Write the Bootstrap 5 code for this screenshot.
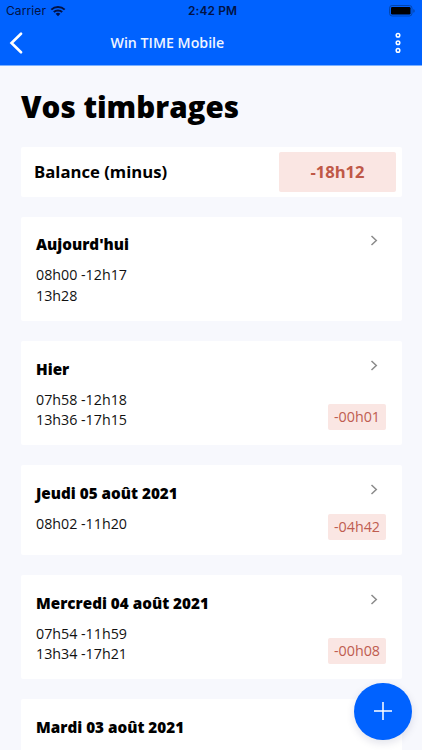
<!DOCTYPE html>
<html lang="fr">
<head>
<meta charset="utf-8">
<meta name="viewport" content="width=device-width, initial-scale=1">
<title>Win TIME Mobile</title>
<link href="https://cdn.jsdelivr.net/npm/bootstrap@5.3.0/dist/css/bootstrap.min.css" rel="stylesheet">
<style>
body{background:#f7f8fd;color:#000;font-family:"Open Sans",sans-serif;height:750px}
svg{display:block}
.app-header{background:#0062ff;height:66px;border-bottom:1px solid #7ab0ff}
.status-bar{height:22px;padding:0 7px 0 6px;font:400 12px/22px Inter,sans-serif;color:#021245}
.status-bar>*{flex:1 1 0}
.carrier{font-size:12px;letter-spacing:.1px}
.clock{font-weight:600;font-size:11.9px;letter-spacing:.15px;padding-left:4px}
.title-bar{height:42px;padding:0 20px 0 9px}
.app-title{font-size:14.2px;font-weight:600;line-height:20px;margin-left:86.5px;color:#eef4ff}
.page{padding:21px 20.5px 0 21px}
.page-title{font-size:29.6px;font-weight:800;line-height:40px;margin:0 0 20px}
.stack{gap:20px}
.tile{background:#fff;border:0;border-radius:2px}
.balance{height:50px;padding:0 5.5px 0 13px}
.balance-label{font-size:16.7px;font-weight:700;padding-bottom:1px}
.balance-value{width:117px;height:40px;border-radius:2px;background:#fae6e3;color:#bf5847;font-size:16.6px;font-weight:700}
.day{padding:16.4px 15.5px 15px 15px;min-height:104.15px}
.day-short{min-height:90px}
.day-title{font-size:15.25px;font-weight:800;line-height:22px;margin:0 0 10px}
.times{font-size:14.25px;line-height:20.3px;color:#111}
.diff{width:58px;height:26.5px;border-radius:2px;background:#fae6e3;color:#bf5d50;font-size:14.3px;line-height:20px}
.chev{margin:2px 8px 0 0}
.fab{width:57.5px;height:57.5px;right:10.5px;bottom:10px;background:#0062ff;box-shadow:0 3px 9px rgba(0,20,80,.12)}
</style>
<script src="https://cdn.jsdelivr.net/npm/bootstrap@5.3.0/dist/js/bootstrap.bundle.min.js"></script>
</head>
<body class="overflow-hidden">
<header class="app-header">
  <div class="status-bar d-flex align-items-center">
    <div class="d-flex align-items-center gap-1"><span class="carrier">Carrier</span>
      <svg width="16" height="12" viewBox="0 0 16 12" fill="none" stroke="#021245" stroke-width="2"><path d="M1.3 4.6a9.6 9.6 0 0 1 13.4 0M3.8 7.1a6.1 6.1 0 0 1 8.4 0"/><path d="M5.6 8.8a3.5 3.5 0 0 1 4.8 0L8 11.2z" fill="#021245" stroke="none"/></svg>
    </div>
    <div class="clock text-center">2:42 PM</div>
    <div class="d-flex justify-content-end">
      <svg width="26" height="12" viewBox="0 0 26 12"><rect x=".5" y=".5" width="22.5" height="10.5" rx="2.7" fill="none" stroke="#0345ad"/><rect x="2" y="2" width="19.5" height="7.5" rx="1.2" fill="#000"/><path d="M24.3 4v3.8q1.4-.6 1.4-1.9T24.3 4z" fill="#0345ad"/></svg>
    </div>
  </div>
  <div class="title-bar d-flex align-items-center">
    <svg width="15" height="22" viewBox="0 0 15 22" fill="none" stroke="#fff" stroke-width="2.6" stroke-linecap="round"><path d="M12 1.7 2.5 11l9.5 9.3"/></svg>
    <div class="app-title">Win TIME Mobile</div>
    <svg class="ms-auto" width="8" height="22" viewBox="0 0 8 22" fill="none" stroke="#fff" stroke-width="1.5"><circle cx="4" cy="3.3" r="1.8"/><circle cx="4" cy="10.8" r="1.8"/><circle cx="4" cy="18.4" r="1.8"/></svg>
  </div>
</header>
<main class="page">
  <h1 class="page-title">Vos timbrages</h1>
  <div class="stack d-flex flex-column">
    <section class="tile balance d-flex align-items-center justify-content-between">
      <span class="balance-label">Balance (minus)</span>
      <span class="balance-value d-flex align-items-center justify-content-center">-18h12</span>
    </section>
    <section class="tile day d-flex justify-content-between">
      <div><h2 class="day-title">Aujourd'hui</h2><div class="times">08h00 -12h17<br>13h28</div></div>
      <div class="d-flex flex-column align-items-end justify-content-between"><svg class="chev" width="8" height="11" viewBox="0 0 8 11" fill="none" stroke="#8b8b8b" stroke-width="1.5"><path d="M1.5 1 6.3 5.5 1.5 10"/></svg></div>
    </section>
    <section class="tile day d-flex justify-content-between">
      <div><h2 class="day-title">Hier</h2><div class="times">07h58 -12h18<br>13h36 -17h15</div></div>
      <div class="d-flex flex-column align-items-end justify-content-between"><svg class="chev" width="8" height="11" viewBox="0 0 8 11" fill="none" stroke="#8b8b8b" stroke-width="1.5"><path d="M1.5 1 6.3 5.5 1.5 10"/></svg><span class="diff d-flex align-items-center justify-content-center">-00h01</span></div>
    </section>
    <section class="tile day day-short d-flex justify-content-between">
      <div><h2 class="day-title">Jeudi 05 août 2021</h2><div class="times">08h02 -11h20</div></div>
      <div class="d-flex flex-column align-items-end justify-content-between"><svg class="chev" width="8" height="11" viewBox="0 0 8 11" fill="none" stroke="#8b8b8b" stroke-width="1.5"><path d="M1.5 1 6.3 5.5 1.5 10"/></svg><span class="diff d-flex align-items-center justify-content-center">-04h42</span></div>
    </section>
    <section class="tile day d-flex justify-content-between">
      <div><h2 class="day-title">Mercredi 04 août 2021</h2><div class="times">07h54 -11h59<br>13h34 -17h21</div></div>
      <div class="d-flex flex-column align-items-end justify-content-between"><svg class="chev" width="8" height="11" viewBox="0 0 8 11" fill="none" stroke="#8b8b8b" stroke-width="1.5"><path d="M1.5 1 6.3 5.5 1.5 10"/></svg><span class="diff d-flex align-items-center justify-content-center">-00h08</span></div>
    </section>
    <section class="tile day"><h2 class="day-title">Mardi 03 août 2021</h2></section>
  </div>
</main>
<button class="fab btn rounded-circle position-fixed p-0 d-flex align-items-center justify-content-center" type="button" aria-label="Ajouter">
  <svg width="20" height="20" viewBox="0 0 20 20" stroke="#fff" stroke-width="1.5"><path d="M10 1v18M1 10h18"/></svg>
</button>
</body>
</html>
